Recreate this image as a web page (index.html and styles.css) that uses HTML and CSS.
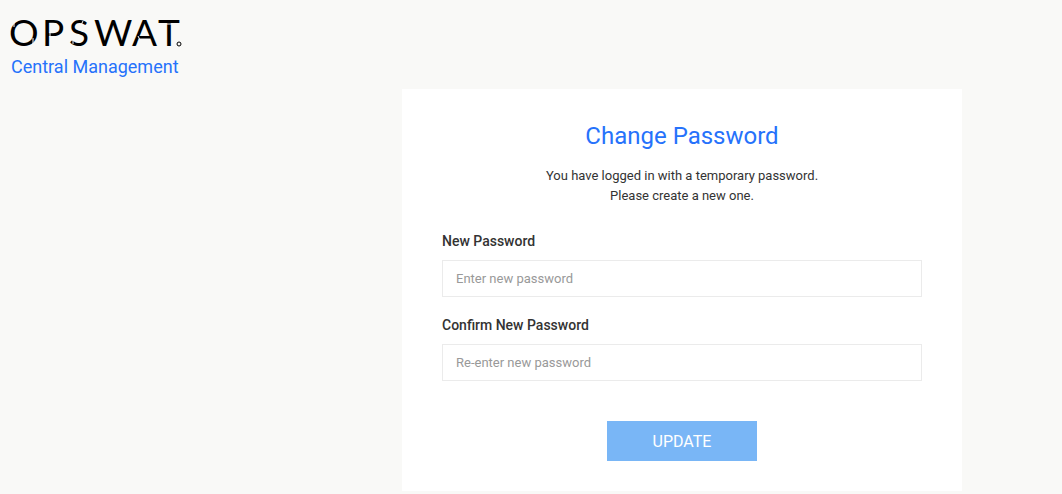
FILE: index.html
```html
<!DOCTYPE html>
<html lang="en">

    <head>
        <meta charset="UTF-8">
        <meta name="viewport" content="width=device-width, initial-scale=1.0">
        <title>Change Password</title>
        <link rel="stylesheet" href="styles.css">
    </head>

    <body>
        <header class="brand">
            <svg class="logo" width="176" height="46" viewBox="0 0 176 46" role="img" aria-label="OPSWAT">
                <text class="logo-text" x="-1 32 59 84 122 148" y="36">OPSWAT</text>
                <!-- stencil cuts -->
                <g class="logo-cuts">
                    <path d="M4 12v5M23 28v6M40 22v5M73 11l-2 4M63 29v5M128 26l3 6M152 14h14" />
                </g>
                <circle class="logo-mark" cx="169" cy="34" r="2" />
            </svg>
            <div class="product">Central Management</div>
        </header>

        <main class="card">
            <h1>Change Password</h1>
            <p class="intro">You have logged in with a temporary password.<br>Please create a new one.</p>

            <form>
                <div class="field">
                    <label for="newPassword">New Password</label>
                    <input type="password" id="newPassword" placeholder="Enter new password">
                </div>
                <div class="field">
                    <label for="confirmPassword">Confirm New Password</label>
                    <input type="password" id="confirmPassword" placeholder="Re-enter new password">
                </div>
                <button type="submit">UPDATE</button>
            </form>
        </main>
    </body>

</html>
```
FILE: styles.css
```css
* {
    box-sizing: border-box;
}

body {
    margin: 0;
    padding: 10px 100px 3px 10px;
    background: #f9f9f7;
    color: #333;
    font-family: Roboto, Arial, sans-serif;
    font-size: 13px;
    line-height: 20px;
}

.brand {
    height: 79px;
}

.logo {
    display: block;
    overflow: visible;
}

.logo-text {
    font-family: Lato, sans-serif;
    font-size: 37px;
    fill: #000;
}

.logo-cuts {
    fill: none;
    stroke: #f9f9f7;
    stroke-width: 1;
}

.logo-mark {
    fill: none;
    stroke: #000;
}

.product {
    padding-left: 1px;
    color: #2672fb;
    font-size: 18px;
    line-height: 22px;
}

.card {
    max-width: 560px;
    margin-left: auto;
    padding: 31px 40px 30px;
    background: #fff;
}

h1 {
    margin: 0 0 14px;
    color: #2672fb;
    font-size: 24px;
    font-weight: 400;
    line-height: 32px;
    text-align: center;
}

.intro {
    margin: 0 0 25px;
    text-align: center;
}

.field {
    margin-bottom: 18px;
}

.field label {
    display: block;
    margin-bottom: 9px;
    font-size: 14px;
    font-weight: 500;
}

.field input {
    display: block;
    width: 100%;
    height: 37px;
    padding: 0 13px;
    border: 1px solid #ebebeb;
    background: #fff;
    color: #333;
    font: inherit;
}

.field input::placeholder {
    color: #999;
}

button {
    display: block;
    width: 150px;
    height: 40px;
    margin: 40px auto 0;
    border: none;
    background: #79b6f6;
    color: #fff;
    font-family: inherit;
    font-size: 16px;
    cursor: pointer;
}
```
